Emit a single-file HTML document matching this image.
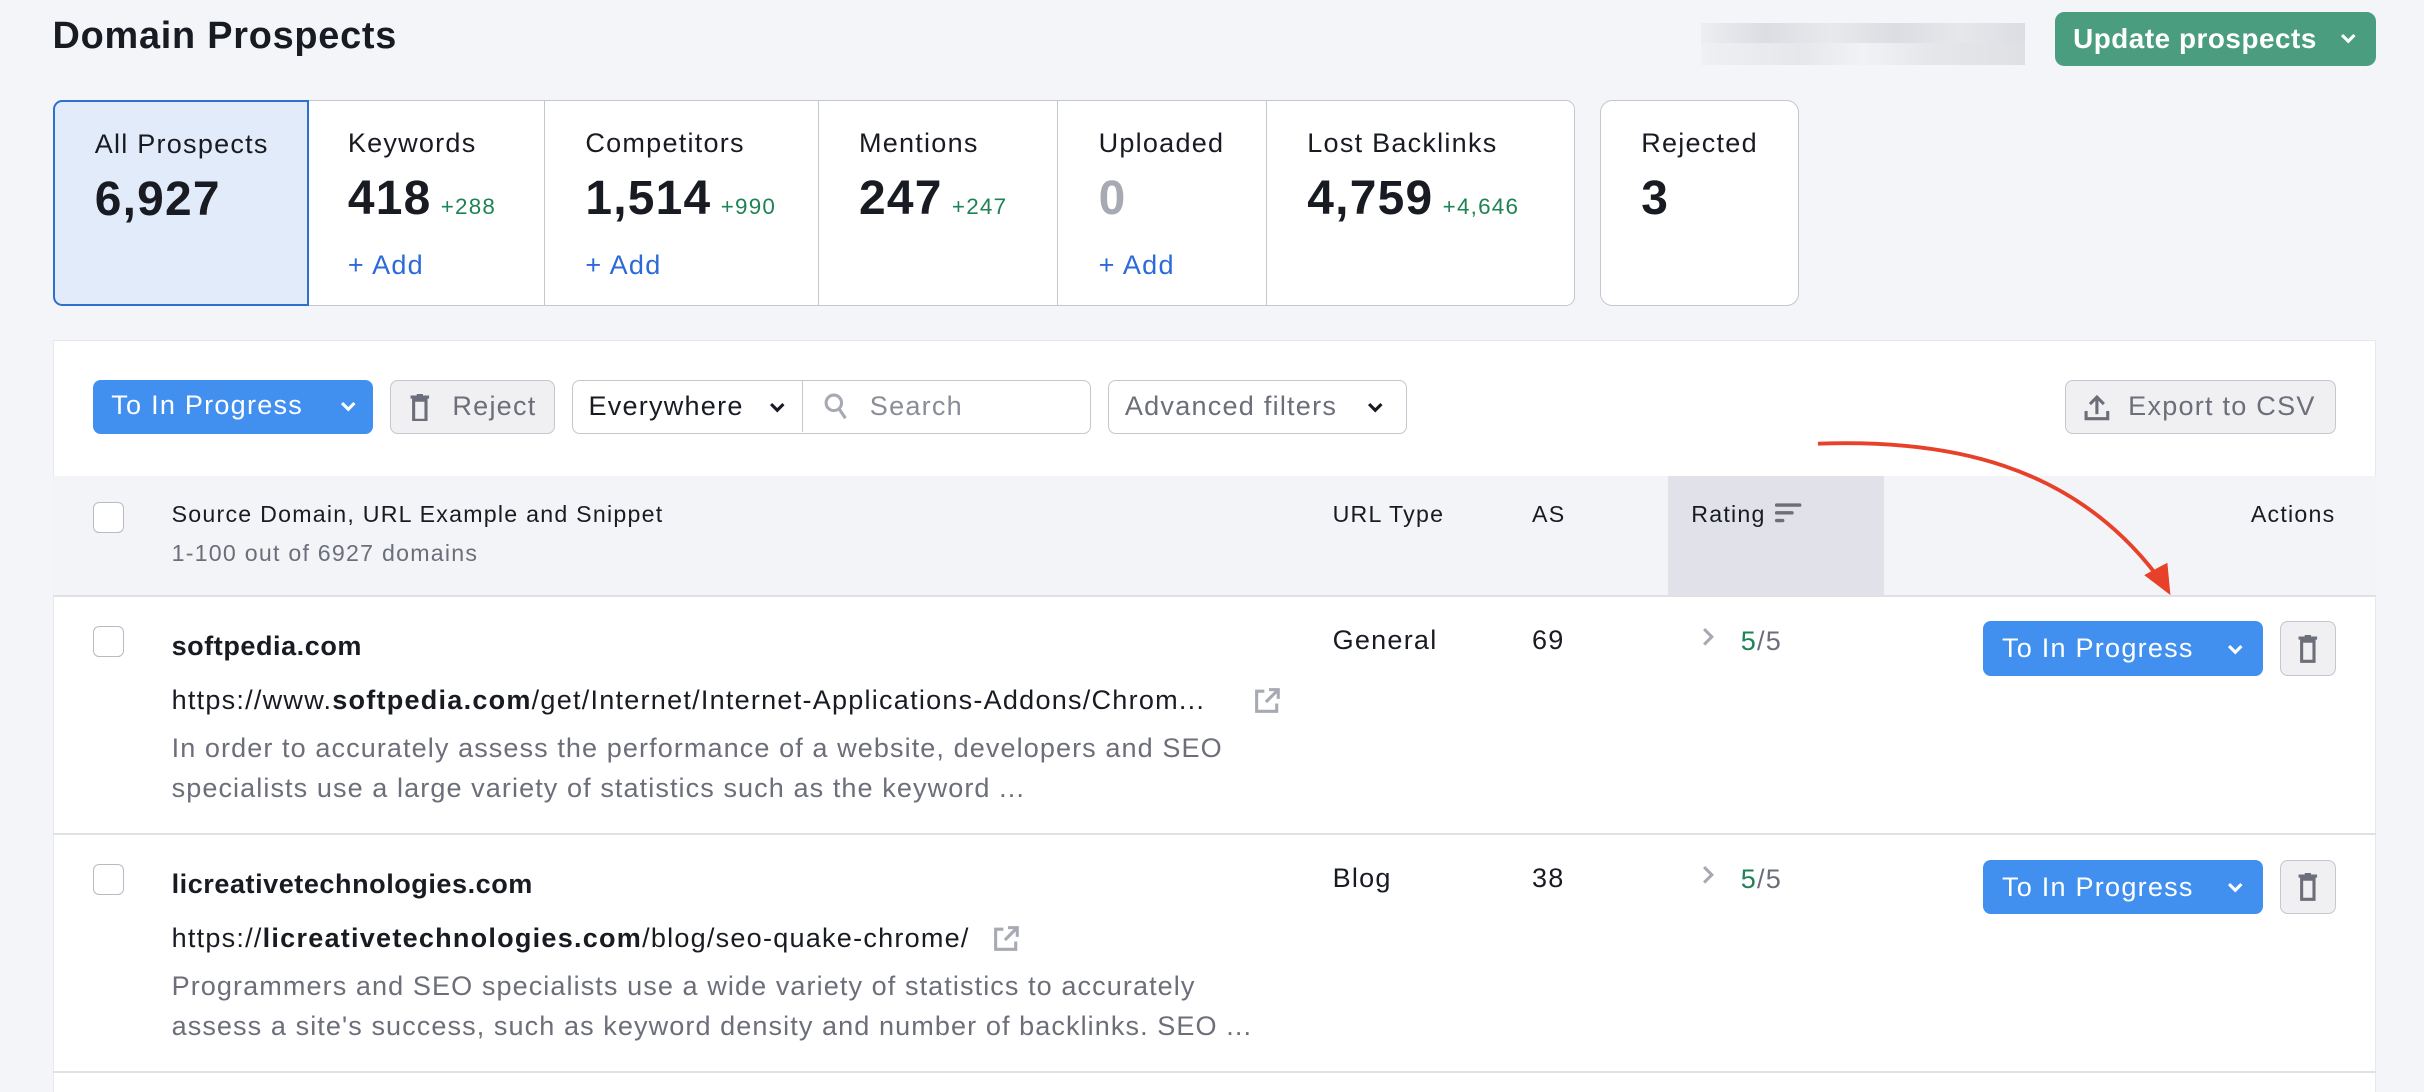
<!DOCTYPE html>
<html><head><meta charset="utf-8"><style>
html,body{margin:0;padding:0;}
html{width:2424px;height:1092px;overflow:hidden;background:#f4f5f9;}
body{zoom:1.54592;width:1568px;height:706px;position:relative;font-family:"Liberation Sans",sans-serif;color:#191b23;overflow:hidden;letter-spacing:0.05em;}
.a{position:absolute;white-space:nowrap;}
.card{position:absolute;top:65px;height:133px;background:#fff;border:1px solid #c4c7cf;box-sizing:border-box;}
.lbl{position:absolute;left:26px;top:17px;font-size:17.5px;}
.num{position:absolute;left:26px;top:45px;font-size:31px;font-weight:bold;}
.num small{font-size:14.5px;font-weight:normal;color:#1f8256;margin-left:6px;}
.add{position:absolute;left:26px;top:96px;font-size:17.5px;color:#2b6ad8;}
.btn{position:absolute;top:246px;height:35px;box-sizing:border-box;border-radius:5px;font-size:17.5px;line-height:33px;}
.chk{position:absolute;left:60px;width:20px;height:20px;border:1px solid #b8bbc4;border-radius:4px;box-sizing:border-box;background:#fff;}
.hr{position:absolute;left:34px;width:1503px;height:1px;background:#e0e1e7;}
.t17{font-size:17.5px;}
.snip{font-size:17.5px;color:#6c6e79;line-height:26px;letter-spacing:0.04em;}
.prog{position:absolute;left:1283px;width:181px;height:35px;background:#4190ef;border-radius:5px;color:#fff;font-size:17.5px;line-height:35px;box-sizing:border-box;padding-left:12px;}
.trash{position:absolute;left:1475px;width:36px;height:35px;border:1px solid #c4c7cf;background:#f0f0f3;border-radius:5px;box-sizing:border-box;}
.h15{font-size:15px;}
</style></head><body>
<div class="a" style="left:34px;top:10px;font-size:24.5px;font-weight:bold;letter-spacing:0.02em;">Domain Prospects</div>
<div class="a" style="left:1100px;top:15px;width:210px;height:13px;background:linear-gradient(90deg,#eceef2,#dcdde2 20%,#e8e9ed 40%,#dcdde2 60%,#e6e7eb 80%,#dcdde2);"></div>
<div class="a" style="left:1100px;top:28px;width:210px;height:14px;background:linear-gradient(90deg,#eef0f3,#e6e7eb 30%,#f1f2f5 50%,#e6e7eb 70%,#dfe0e4);"></div>
<div class="a" style="left:1329px;top:8px;width:208px;height:35px;background:#4a9d7f;border-radius:6px;color:#fff;font-size:18px;font-weight:bold;line-height:35px;padding-left:12px;box-sizing:border-box;letter-spacing:0.02em;">Update prospects
<svg style="position:absolute;right:12px;top:13px" width="12" height="9" viewBox="0 0 12 9"><path d="M2 2l4 4 4-4" stroke="#fff" stroke-width="2" fill="none"/></svg></div>

<div class="card" style="left:34px;width:166px;background:#e1ebf9;border:1.5px solid #2f6fcf;border-radius:6px 0 0 6px;z-index:2"><div class="lbl">All Prospects</div><div class="num">6,927</div></div>
<div class="card" style="left:199px;width:154px;border-left:none"><div class="lbl">Keywords</div><div class="num">418<small>+288</small></div><div class="add">+ Add</div></div>
<div class="card" style="left:352px;width:178px"><div class="lbl">Competitors</div><div class="num">1,514<small>+990</small></div><div class="add">+ Add</div></div>
<div class="card" style="left:529px;width:156px"><div class="lbl">Mentions</div><div class="num">247<small>+247</small></div></div>
<div class="card" style="left:684px;width:136px"><div class="lbl">Uploaded</div><div class="num" style="color:#a8aab3">0</div><div class="add">+ Add</div></div>
<div class="card" style="left:819px;width:200px;border-radius:0 6px 6px 0"><div class="lbl">Lost Backlinks</div><div class="num">4,759<small>+4,646</small></div></div>
<div class="card" style="left:1035px;width:129px;border-radius:8px"><div class="lbl">Rejected</div><div class="num">3</div></div>

<div class="a" style="left:34px;top:220px;width:1503px;height:490px;background:#fff;border:1px solid #e8e9ee;box-sizing:border-box;"></div>

<div class="btn" style="left:60px;width:181px;background:#4190ef;color:#fff;padding-left:12px;">To In Progress<svg style="position:absolute;right:10px;top:13px" width="12" height="9" viewBox="0 0 12 9"><path d="M2 2l4 4 4-4" stroke="#fff" stroke-width="2" fill="none"/></svg></div>
<div class="btn" style="left:252px;width:107px;background:#f0f0f3;border:1px solid #c4c7cf;color:#6c6e79;padding-left:40px;"><svg style="position:absolute;left:12px;top:8px" width="14" height="18" viewBox="0 0 14 18"><path d="M1 2h12M5 1h4M3 4h8v13H3z" stroke="#6c6e79" stroke-width="2" fill="none"/></svg>Reject</div>
<div class="btn" style="left:370px;width:336px;background:#fff;border:1px solid #c4c7cf;padding-left:10px;">Everywhere<svg style="position:absolute;left:126px;top:13px" width="12" height="9" viewBox="0 0 12 9"><path d="M2 2l4 4 4-4" stroke="#191b23" stroke-width="2" fill="none"/></svg><div style="position:absolute;left:148px;top:0;width:1px;height:33px;background:#c4c7cf"></div><svg style="position:absolute;left:162px;top:7px" width="18" height="20" viewBox="0 0 18 20"><circle cx="7" cy="7" r="5" stroke="#a8aab3" stroke-width="2" fill="none"/><path d="M10.5 11l4 6" stroke="#a8aab3" stroke-width="2"/></svg><span style="position:absolute;left:192px;color:#8a8d97">Search</span></div>
<div class="btn" style="left:717px;width:193px;background:#fff;border:1px solid #c4c7cf;color:#6c6e79;padding-left:10px;">Advanced filters<svg style="position:absolute;right:14px;top:13px" width="12" height="9" viewBox="0 0 12 9"><path d="M2 2l4 4 4-4" stroke="#191b23" stroke-width="2" fill="none"/></svg></div>
<div class="btn" style="left:1336px;width:175px;background:#f0f0f3;border:1px solid #c4c7cf;color:#6c6e79;padding-left:40px;"><svg style="position:absolute;left:11px;top:8px" width="18" height="18" viewBox="0 0 18 18"><path d="M9 13V2M4.5 6.5L9 2l4.5 4.5M2 11v5h14v-5" stroke="#6c6e79" stroke-width="2" fill="none"/></svg>Export to CSV</div>

<div class="a" style="left:34px;top:308px;width:1503px;height:77px;background:#f3f4f8;"></div>
<div class="a" style="left:1079px;top:308px;width:140px;height:77px;background:#e0e1e9;"></div>
<div class="chk" style="top:325px"></div>
<div class="a h15" style="left:111px;top:324px;">Source Domain, URL Example and Snippet</div>
<div class="a h15" style="left:111px;top:349px;color:#6c6e79;">1-100 out of 6927 domains</div>
<div class="a h15" style="left:862px;top:324px;">URL Type</div>
<div class="a h15" style="left:991px;top:324px;">AS</div>
<div class="a h15" style="left:1094px;top:324px;">Rating</div>
<svg class="a" style="left:1148px;top:325px" width="18" height="14" viewBox="0 0 18 14"><path d="M1 2h15M1 7h10M1 12h4" stroke="#6c6e79" stroke-width="2.2" stroke-linecap="round"/></svg>
<div class="a h15" style="left:1456px;top:324px;">Actions</div>
<div class="hr" style="top:385px"></div>

<!-- row 1 -->
<div class="chk" style="top:405px"></div>
<div class="a" style="left:111px;top:408px;font-size:17.5px;font-weight:bold;letter-spacing:0.02em;">softpedia.com</div>
<div class="a t17" style="left:111px;top:443px;">https://www.<b>softpedia.com</b>/get/Internet/Internet-Applications-Addons/Chrom...</div>
<svg class="a" style="left:810px;top:443px" width="20" height="20" viewBox="0 0 20 20"><path d="M8 4H3v13h13v-5M11 3h6v6M17 3l-8 8" stroke="#a8aab3" stroke-width="2" fill="none"/></svg>
<div class="a snip" style="left:111px;top:471px;">In order to accurately assess the performance of a website, developers and SEO<br>specialists use a large variety of statistics such as the keyword ...</div>
<div class="a t17" style="left:862px;top:404px;">General</div>
<div class="a t17" style="left:991px;top:404px;">69</div>
<svg class="a" style="left:1100px;top:405px" width="10" height="14" viewBox="0 0 10 14"><path d="M2 2l5 5-5 5" stroke="#a8aab3" stroke-width="2" fill="none"/></svg>
<div class="a t17" style="left:1126px;top:405px;color:#6c6e79;"><span style="color:#1f8256">5</span>/5</div>
<div class="prog" style="top:402px">To In Progress<svg style="position:absolute;right:12px;top:14px" width="12" height="9" viewBox="0 0 12 9"><path d="M2 2l4 4 4-4" stroke="#fff" stroke-width="2" fill="none"/></svg></div>
<div class="trash" style="top:402px"><svg style="position:absolute;left:10px;top:8px" width="14" height="18" viewBox="0 0 14 18"><path d="M1 2h12M5 1h4M3 4h8v13H3z" stroke="#6c6e79" stroke-width="2" fill="none"/></svg></div>
<div class="hr" style="top:539px"></div>

<!-- row 2 -->
<div class="chk" style="top:559px"></div>
<div class="a" style="left:111px;top:562px;font-size:17.5px;font-weight:bold;letter-spacing:0.02em;">licreativetechnologies.com</div>
<div class="a t17" style="left:111px;top:597px;">https://<b>licreativetechnologies.com</b>/blog/seo-quake-chrome/</div>
<svg class="a" style="left:641px;top:597px" width="20" height="20" viewBox="0 0 20 20"><path d="M8 4H3v13h13v-5M11 3h6v6M17 3l-8 8" stroke="#a8aab3" stroke-width="2" fill="none"/></svg>
<div class="a snip" style="left:111px;top:625px;">Programmers and SEO specialists use a wide variety of statistics to accurately<br>assess a site's success, such as keyword density and number of backlinks. SEO ...</div>
<div class="a t17" style="left:862px;top:558px;">Blog</div>
<div class="a t17" style="left:991px;top:558px;">38</div>
<svg class="a" style="left:1100px;top:559px" width="10" height="14" viewBox="0 0 10 14"><path d="M2 2l5 5-5 5" stroke="#a8aab3" stroke-width="2" fill="none"/></svg>
<div class="a t17" style="left:1126px;top:559px;color:#6c6e79;"><span style="color:#1f8256">5</span>/5</div>
<div class="prog" style="top:556px">To In Progress<svg style="position:absolute;right:12px;top:14px" width="12" height="9" viewBox="0 0 12 9"><path d="M2 2l4 4 4-4" stroke="#fff" stroke-width="2" fill="none"/></svg></div>
<div class="trash" style="top:556px"><svg style="position:absolute;left:10px;top:8px" width="14" height="18" viewBox="0 0 14 18"><path d="M1 2h12M5 1h4M3 4h8v13H3z" stroke="#6c6e79" stroke-width="2" fill="none"/></svg></div>
<div class="hr" style="top:693px"></div>

<!-- arrow -->
<svg class="a" style="left:0;top:0" width="1568" height="706" viewBox="0 0 1568 706"><path d="M1176 287 C1260 284 1340 300 1395 372" stroke="#e8412a" stroke-width="2.5" fill="none"/><path d="M1387 372 L1404 385 L1402 364 Z" fill="#e8412a"/></svg>
</body></html>
